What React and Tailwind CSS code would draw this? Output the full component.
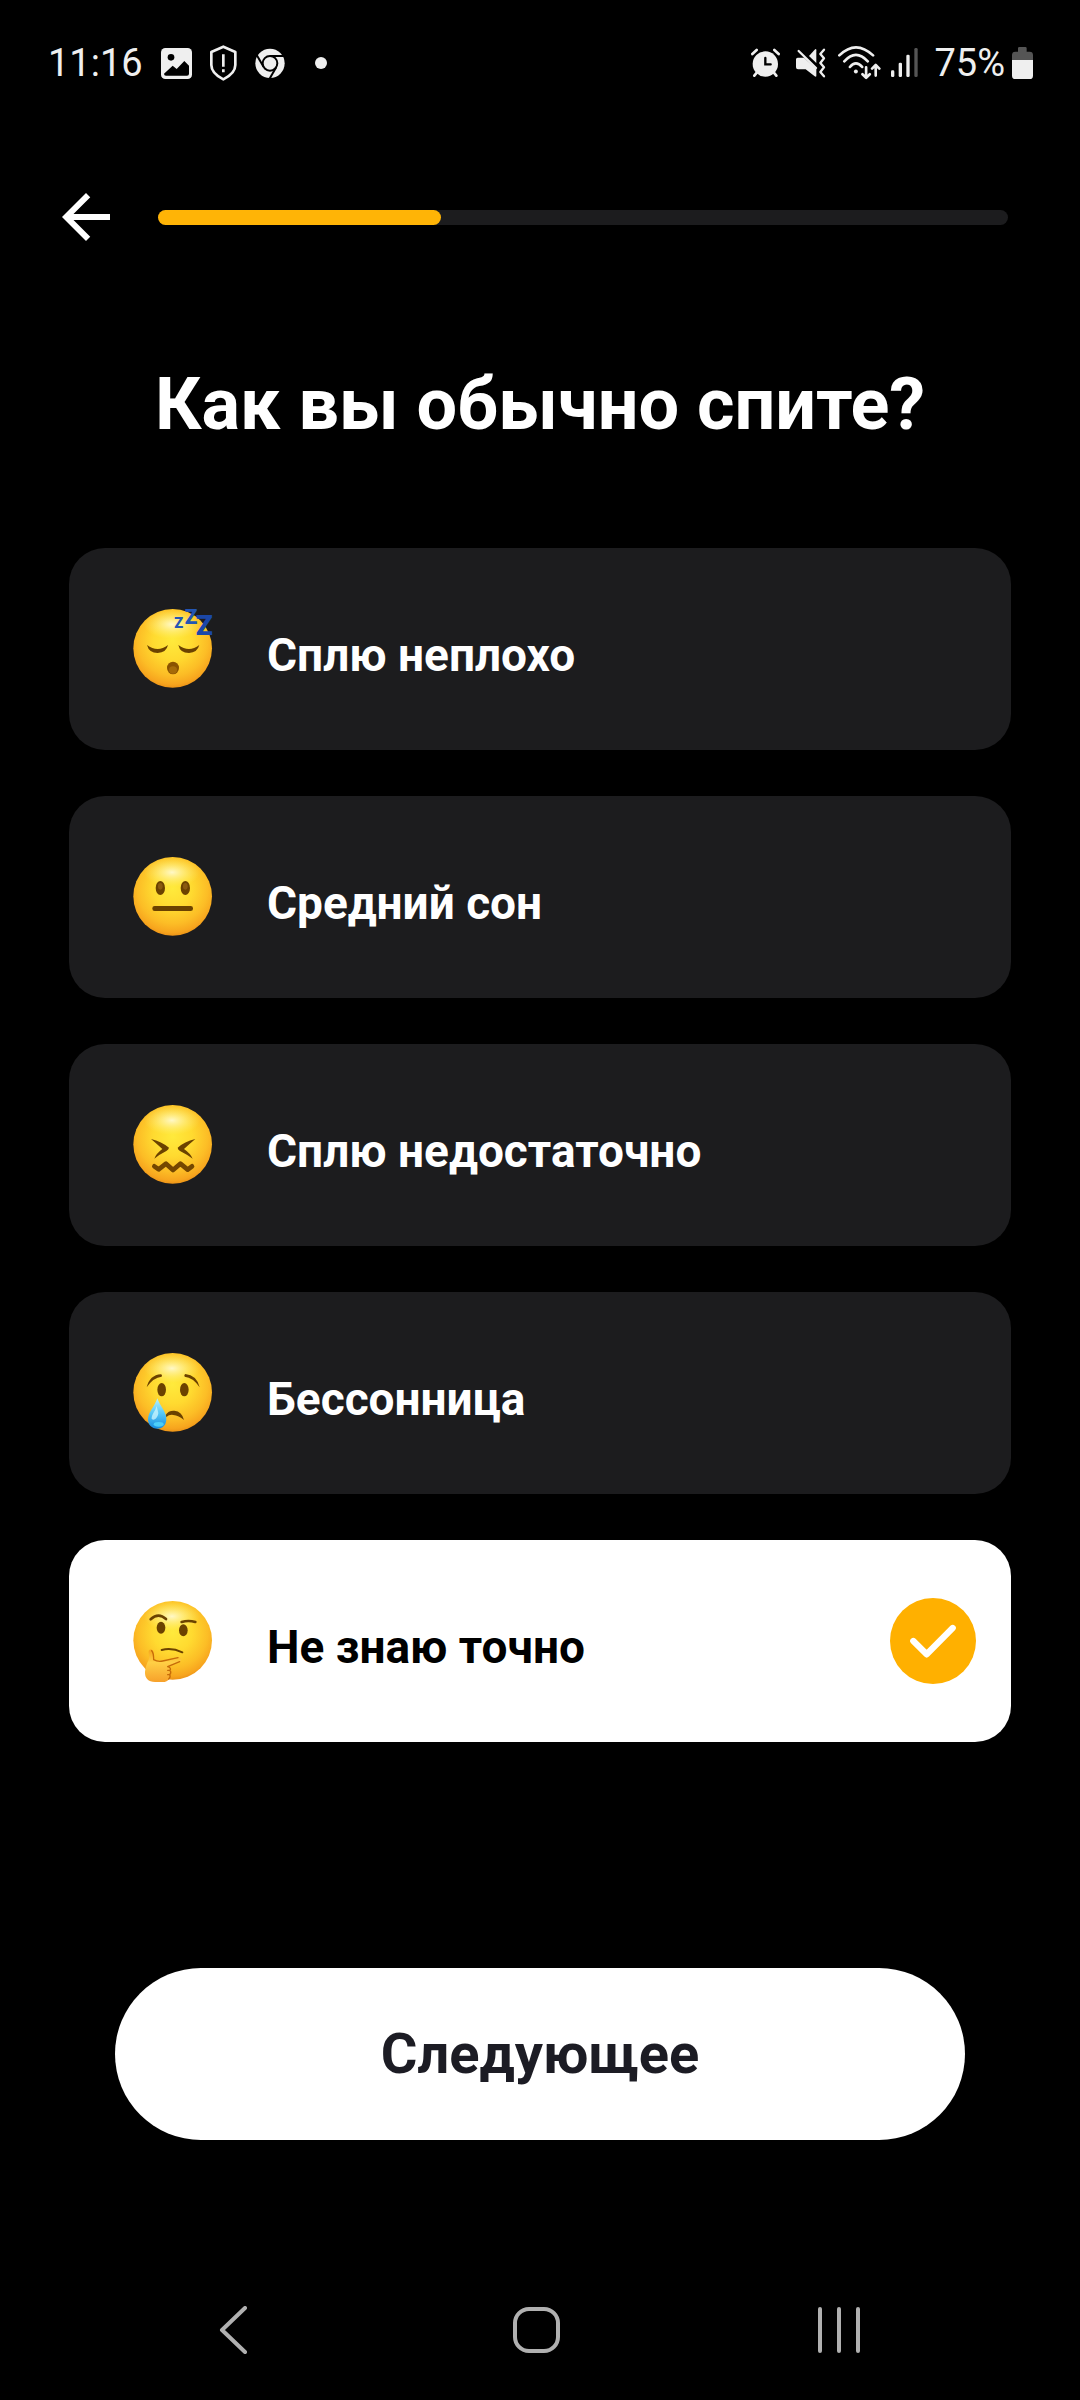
import { useState } from 'react';

const INK = '#6b4200';

/* Status bar icons */

function ImageIcon() {
  return (
    <svg viewBox="0 0 93 108" className="w-[31px] h-9" aria-hidden="true">
      <rect x="0" y="9" width="93" height="93" rx="13" fill="#efefef" />
      <circle cx="30" cy="37" r="10" fill="#000" />
      <path d="M9 86 35 62 47 72 70 48 84 62V86Q84 92 78 92H15Q9 92 9 86Z" fill="#000" />
    </svg>
  );
}

function ShieldIcon() {
  return (
    <svg viewBox="0 0 81 108" className="w-[27px] h-9" aria-hidden="true" fill="none" stroke="#efefef">
      <path d="M40 5 76 21V60C76 79 60 93 40 103 20 93 4 79 4 60V21Z" strokeWidth="8" strokeLinejoin="round" />
      <path d="M40 28V65M40 73V82" strokeWidth="8" />
    </svg>
  );
}

function ChromeIcon() {
  return (
    <svg viewBox="0 0 90 108" className="w-[30px] h-9" aria-hidden="true">
      <circle cx="45" cy="55" r="44" fill="#efefef" />
      <circle cx="45" cy="55" r="22" fill="#efefef" stroke="#000" strokeWidth="6" />
      <g stroke="#000" strokeWidth="6">
        <path d="M45 33H90" />
        <path d="M45 33H90" transform="rotate(120 45 55)" />
        <path d="M45 33H90" transform="rotate(240 45 55)" />
      </g>
    </svg>
  );
}

function AlarmIcon() {
  return (
    <svg viewBox="0 0 87 108" className="w-[29px] h-9" aria-hidden="true" fill="none" strokeLinecap="round">
      <circle cx="43" cy="57" r="38" fill="#efefef" />
      <path d="M4 27 17 15M83 27 70 15M18 82 10 92M68 82 76 92" stroke="#efefef" strokeWidth="8" />
      <path d="M43 39V58H59" stroke="#000" strokeWidth="7" />
    </svg>
  );
}

function MuteIcon() {
  return (
    <svg viewBox="0 0 90 108" className="w-[30px] h-9" aria-hidden="true" fill="#efefef">
      <path d="M5 38H24L61 72V92Q61 97 56 94L29 73H6Q0 73 0 67V43Q0 38 5 38Z" />
      <path d="M39 33 56 14Q61 9 61 16V54Z" />
      <path d="M8 18 60 69" stroke="#efefef" strokeWidth="7" strokeLinecap="round" />
      <path d="M84 14 73 27 84 40 73 54 84 67 73 81 84 94" fill="none" stroke="#efefef" strokeWidth="7" strokeLinecap="round" strokeLinejoin="round" />
    </svg>
  );
}

function WifiIcon() {
  return (
    <svg viewBox="0 0 130 108" className="w-[43px] h-9" aria-hidden="true" fill="none" stroke="#efefef" strokeWidth="8" strokeLinecap="round" strokeLinejoin="round">
      <path d="M4 31Q54-18 106 31M19 49Q54 10 90 49M36 66Q54 44 73 66" />
      <circle cx="54" cy="80" r="6" fill="#efefef" stroke="none" />
      <path d="M85 67V98M74 88 85 99 96 88M114 92V60M103 71 114 60 125 71" />
    </svg>
  );
}

function SignalIcon() {
  return (
    <svg viewBox="0 0 81 108" className="w-[27px] h-9" aria-hidden="true" fill="#efefef">
      <rect x="0" y="76" width="10" height="20" rx="4" />
      <rect x="23" y="53" width="10" height="43" rx="4" />
      <rect x="46" y="29" width="10" height="67" rx="4" />
      <rect x="70" y="9" width="10" height="87" rx="4" fill="#555" />
    </svg>
  );
}

function BatteryIcon() {
  return (
    <svg viewBox="0 0 63 108" className="w-[21px] h-9" aria-hidden="true">
      <path d="M18 20V10Q18 6 22 6H40Q44 6 44 10V20H53Q63 20 63 30V48H0V30Q0 20 10 20Z" fill="#555" />
      <path d="M0 45H63V92Q63 102 53 102H10Q0 102 0 92Z" fill="#efefef" />
    </svg>
  );
}

/* Emoji faces */

function Face({ id, children }) {
  return (
    <svg viewBox="0 0 360 360" className="w-30 h-30 shrink-0" aria-hidden="true">
      <defs>
        <radialGradient id={`${id}-base`} cx="0.5" cy="0.4" r="0.62">
          <stop offset="0" stopColor="#ffea3c" />
          <stop offset="0.4" stopColor="#ffda30" />
          <stop offset="0.72" stopColor="#fcbd26" />
          <stop offset="0.9" stopColor="#f7a51e" />
          <stop offset="1" stopColor="#e88c14" />
        </radialGradient>
        <radialGradient id={`${id}-shine`} cx="0.5" cy="0.5" r="0.5">
          <stop offset="0" stopColor="#fffbd8" stopOpacity="0.9" />
          <stop offset="1" stopColor="#fff27a" stopOpacity="0" />
        </radialGradient>
      </defs>
      <circle cx="185" cy="178" r="118" fill={`url(#${id}-base)`} />
      <ellipse cx="183" cy="106" rx="84" ry="44" fill={`url(#${id}-shine)`} />
      {children}
    </svg>
  );
}

function SleepingFace() {
  return (
    <Face id="sleeping">
      <path d="M108 168Q140 192 171 168Q166 191 140 192 114 192 108 168Z" fill={INK} />
      <path d="M202 168Q234 192 265 168Q259 191 234 192 207 192 202 168Z" fill={INK} />
      <ellipse cx="186" cy="237" rx="18" ry="19" fill="#8a5200" />
      <ellipse cx="186" cy="243" rx="12" ry="11" fill="#a56a08" />
      <g fill="#2456b4" fontFamily="Roboto, sans-serif" fontWeight="900">
        <text x="190" y="118" fontSize="44">Z</text>
        <text x="221" y="104" fontSize="62">Z</text>
        <text x="254" y="139" fontSize="84" fill="#1b47a8">Z</text>
      </g>
    </Face>
  );
}

function NeutralFace() {
  return (
    <Face id="neutral">
      <g fill={INK}>
        <ellipse cx="148" cy="153" rx="14" ry="21" />
        <ellipse cx="223" cy="153" rx="14" ry="21" />
        <rect x="124" y="207" width="122" height="15" rx="7" />
      </g>
      <g fill="#8a5a10">
        <ellipse cx="148" cy="148" rx="7" ry="10" />
        <ellipse cx="223" cy="148" rx="7" ry="10" />
      </g>
    </Face>
  );
}

function ConfoundedFace() {
  return (
    <Face id="confounded">
      <g fill={INK}>
        <path d="M120 162Q152 170 174 188 173 194 166 198 146 208 130 221 135 206 154 192 139 178 120 162Z" />
        <path d="M253 162Q220 170 200 188 200 194 207 198 227 208 245 221 238 205 219 192 234 178 253 162Z" />
      </g>
      <path
        d="M130 244 143 253 165 236 186 255 208 236 230 254 243 244"
        fill="none" stroke="#754700" strokeWidth="14" strokeLinecap="round" strokeLinejoin="round"
      />
    </Face>
  );
}

function CryingFace() {
  return (
    <Face id="crying">
      <g fill={INK}>
        <ellipse cx="152" cy="170" rx="13" ry="20" />
        <ellipse cx="220" cy="170" rx="13" ry="20" />
        <path d="M107 163Q116 126 150 124 155 125 152 131 127 133 107 163Z" />
        <path d="M266 163Q257 126 223 123 218 125 221 131 246 133 266 163Z" />
        <path d="M164 246Q172 232 190 233 213 235 219 261 203 247 187 246 175 244 166 252Z" />
      </g>
      <defs>
        <linearGradient id="tear" x1="0" y1="0" x2="0" y2="1">
          <stop offset="0" stopColor="#b9f3ff" />
          <stop offset="0.5" stopColor="#55c7f5" />
          <stop offset="1" stopColor="#168be0" />
        </linearGradient>
      </defs>
      <path d="M139 196C147 219 166 237 166 258 166 276 155 287 139 287 122 287 111 276 111 259 111 238 132 219 139 196Z" fill="url(#tear)" />
      <path d="M137 219C132 237 121 245 122 258 131 265 141 252 142 240Z" fill="#d5faff" opacity="0.7" />
      <ellipse cx="143" cy="274" rx="15" ry="7" fill="#55dbff" opacity="0.8" />
    </Face>
  );
}

function ThinkingFace() {
  return (
    <Face id="thinking">
      <g fill={INK}>
        <ellipse cx="150" cy="140" rx="13" ry="18" />
        <ellipse cx="217" cy="148" rx="13" ry="18" />
      </g>
      <g fill="none" stroke={INK} strokeLinecap="round">
        <path d="M119 115Q142 93 165 114" strokeWidth="8" />
        <path d="M212 123Q232 117 253 123" strokeWidth="8" />
        <path d="M152 207Q182 199 214 214" strokeWidth="6" />
      </g>
      <defs>
        <linearGradient id="hand" x1="0" y1="0" x2="0" y2="1">
          <stop offset="0" stopColor="#f6a51b" />
          <stop offset="0.4" stopColor="#ffcf45" />
          <stop offset="1" stopColor="#f7a12b" />
        </linearGradient>
      </defs>
      <path
        d="M115 207C122 202 130 210 129 220L130 237Q139 242 150 240L201 229C212 228 214 238 206 242L173 257Q182 261 178 268 183 274 177 281 181 288 174 293 170 303 153 303H132C112 302 101 292 102 272 103 258 108 247 113 236 117 225 109 212 115 207Z"
        fill="url(#hand)"
      />
      <path
        d="M122 209Q128 215 128 236 140 243 155 240L201 230M206 242 170 257Q182 261 177 268H170M177 268Q182 275 176 281H170M176 281Q180 288 173 294"
        fill="none" stroke="#c66b08" strokeWidth="4" strokeLinecap="round" strokeLinejoin="round"
      />
    </Face>
  );
}

const options = [
  { key: 'good', label: 'Сплю неплохо', icon: SleepingFace },
  { key: 'average', label: 'Средний сон', icon: NeutralFace },
  { key: 'short', label: 'Сплю недостаточно', icon: ConfoundedFace },
  { key: 'insomnia', label: 'Бессонница', icon: CryingFace },
  { key: 'unsure', label: 'Не знаю точно', icon: ThinkingFace },
];

function StatusBar() {
  return (
    <div className="h-[125px] pl-12 pr-[47px] flex items-center justify-between text-[#efefef] text-[38px] leading-none">
      <div className="flex items-center gap-[18px]">
        <span>11:16</span>
        <ImageIcon />
        <ShieldIcon />
        <ChromeIcon />
        <span className="w-3 h-3 ml-3 rounded-full bg-[#efefef]" />
      </div>
      <div className="flex items-center">
        <AlarmIcon />
        <span className="flex ml-4 mr-3"><MuteIcon /></span>
        <WifiIcon />
        <span className="flex ml-[10px] mr-4"><SignalIcon /></span>
        <span className="mr-[7px]">75%</span>
        <BatteryIcon />
      </div>
    </div>
  );
}

function Option({ option, checked, onSelect }) {
  return (
    <label
      className={`h-[202px] pl-[42px] pr-[35px] rounded-[36px] flex items-center gap-9 cursor-pointer
        ${checked ? 'bg-white text-black' : 'bg-[#1c1c1e] text-white'}
      `}
    >
      <input type="radio" name="sleep" className="sr-only" checked={checked} onChange={onSelect} />
      <option.icon />
      <span className="flex-1 pt-3 text-[46px] leading-none font-bold">{option.label}</span>
      {checked && (
        <svg viewBox="0 0 258 258" className="w-[86px] h-[86px] shrink-0" aria-hidden="true">
          <circle cx="129" cy="129" r="129" fill="#ffb000" />
          <path d="M70 129 110 169 188 90" fill="none" stroke="#fff" strokeWidth="19" strokeLinecap="round" strokeLinejoin="round" />
        </svg>
      )}
    </label>
  );
}

export default function App() {
  const [selected, setSelected] = useState('unsure');

  return (
    <div className="min-h-screen bg-black text-white font-[Roboto,sans-serif] flex flex-col">
      <StatusBar />

      {/* Back and progress */}
      <header className="mt-14 pl-[50px] pr-[72px] flex items-center gap-9">
        <button aria-label="Назад" className="shrink-0">
          <svg viewBox="0 0 24 24" className="w-18 h-18" fill="#fff">
            <path d="M20 11H7.83l5.59-5.59L12 4l-8 8 8 8 1.41-1.41L7.83 13H20v-2z" />
          </svg>
        </button>
        <div
          role="progressbar" aria-valuenow={33} aria-valuemin={0} aria-valuemax={100}
          className="flex-1 h-[15px] rounded-full bg-[#1c1c1e]"
        >
          <div className="w-1/3 h-full rounded-full bg-[#ffb406]" />
        </div>
      </header>

      <main className="flex-1 flex flex-col">
        <h1 className="mt-28 px-12 text-center text-[72px] leading-20 font-bold">
          Как вы обычно спите?
        </h1>

        <div role="radiogroup" className="mt-[103px] px-[69px] flex flex-col gap-[46px]">
          {options.map(option => (
            <Option
              key={option.key}
              option={option}
              checked={selected === option.key}
              onSelect={() => setSelected(option.key)}
            />
          ))}
        </div>

        <button className="mt-auto mx-[115px] h-[172px] rounded-full bg-white text-[#1c1c24] text-[56px] font-bold">
          Следующее
        </button>
      </main>

      {/* System navigation */}
      <nav className="mt-[120px] h-35 pl-20 pr-[88px] grid grid-cols-3 place-items-center">
        <button aria-label="Назад">
          <svg viewBox="0 0 48 48" className="w-12 h-12" fill="none" stroke="#b0b0b0" strokeWidth="4" strokeLinecap="round" strokeLinejoin="round">
            <path d="M37 2 14 24 37 46" />
          </svg>
        </button>
        <button aria-label="Домой">
          <svg viewBox="0 0 48 48" className="w-12 h-12" fill="none" stroke="#b0b0b0" strokeWidth="4">
            <rect x="3" y="3" width="43" height="42" rx="14" />
          </svg>
        </button>
        <button aria-label="Недавние">
          <svg viewBox="0 0 48 48" className="w-12 h-12" fill="none" stroke="#b0b0b0" strokeWidth="4" strokeLinecap="round">
            <path d="M4 3V45M23 3V45M42 3V45" />
          </svg>
        </button>
      </nav>
    </div>
  );
}
